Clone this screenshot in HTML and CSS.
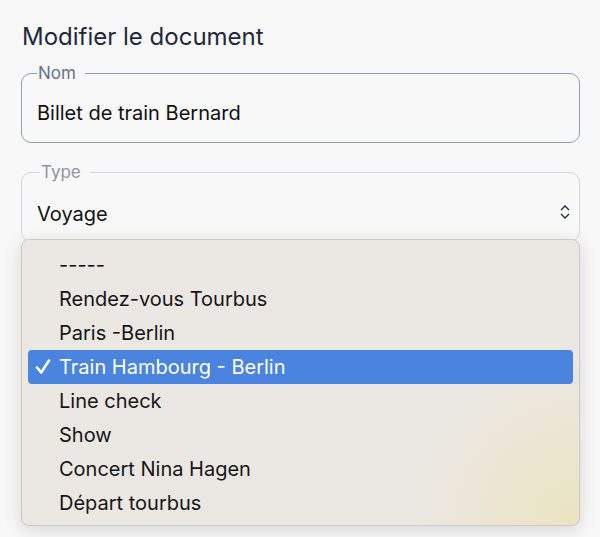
FILE: index.html
```html
<!DOCTYPE html>
<html lang="fr">
<head>
    <meta charset="UTF-8">
    <meta name="viewport" content="width=device-width, initial-scale=1.0">
    <title>Modifier le document</title>
    <link rel="stylesheet" href="styles.css">
</head>
<body>
    <div class="page">
        <h1 class="title">Modifier le document</h1>

        <fieldset class="field field-active">
            <legend>Nom</legend>
            <div class="field-value">Billet de train Bernard</div>
        </fieldset>

        <div class="select-wrap">
            <fieldset class="field field-select">
                <legend>Type</legend>
                <div class="field-value">Voyage</div>
                <svg class="chevrons" width="12" height="16" viewBox="0 0 12 16">
                    <path d="M2 6 L6 2 L10 6 M2 10 L6 14 L10 10" fill="none" stroke="#1e293b" stroke-width="1.3"/>
                </svg>
            </fieldset>

            <div class="menu">
                <div class="menu-item">-----</div>
                <div class="menu-item">Rendez-vous Tourbus</div>
                <div class="menu-item">Paris -Berlin</div>
                <div class="menu-item selected">
                    <svg class="check" width="16" height="16" viewBox="0 0 16 16">
                        <path d="M2 8.5 L6.2 13.5 L14 1.5" fill="none" stroke="#ffffff" stroke-width="2.6" stroke-linecap="round" stroke-linejoin="round"/>
                    </svg>Train Hambourg - Berlin
                </div>
                <div class="menu-item">Line check</div>
                <div class="menu-item">Show</div>
                <div class="menu-item">Concert Nina Hagen</div>
                <div class="menu-item">Départ tourbus</div>
            </div>
        </div>
    </div>
</body>
</html>
```

FILE: styles.css
```css
html, body {
    margin: 0;
    min-height: 537px;
    background-color: #f8f8f8;
}

body {
    font-family: Inter, "Noto Sans", sans-serif;
    color: #111111;
}

.page {
    box-sizing: border-box;
    min-height: 537px;
    padding: 22px 20px 0 21px;
    width: 600px;
}

.title {
    margin: 0 0 13px 1px;
    font-size: 24px;
    font-weight: 400;
    line-height: 29px;
    color: #1e293b;
}

.field {
    position: relative;
    box-sizing: border-box;
    margin: 0;
    padding: 0 15px;
    height: 79px;
    border: 1px solid #d4d6db;
    border-radius: 10px;
}

.field legend {
    padding: 0 9px 0 1px;
    font-size: 17px;
    line-height: 18px;
    color: #8c95a5;
}

.field-active {
    margin-bottom: 20px;
    border-color: #949eae;
}

.field-active legend {
    color: #64748b;
}

.field-select legend {
    margin-left: 3px;
}

.field-value {
    padding-top: 19px;
    font-size: 20px;
    line-height: 24px;
}

.field-select .field-value {
    padding-top: 21px;
}

.chevrons {
    position: absolute;
    right: 8px;
    top: 23px;
}

.select-wrap {
    position: relative;
}

.menu {
    position: absolute;
    z-index: 10;
    left: 0;
    top: 76px;
    width: 559px;
    height: 287px;
    box-sizing: border-box;
    padding: 8px 6px 0 6px;
    border: 1px solid #cdc9c5;
    border-radius: 8px;
    background-color: #ebe7e3;
    background-image: radial-gradient(circle at 100% 100%, #ebe4bf 0, rgba(235, 231, 227, 0) 170px);
    box-shadow: 0 4px 18px rgba(0, 0, 0, 0.14);
}

.menu-item {
    position: relative;
    height: 34px;
    padding-left: 31px;
    border-radius: 4px;
    font-size: 20px;
    line-height: 34px;
    color: #161616;
}

.menu-item.selected {
    background-color: #4a84de;
    color: #ffffff;
}

.check {
    position: absolute;
    left: 7px;
    top: 9px;
}
```
